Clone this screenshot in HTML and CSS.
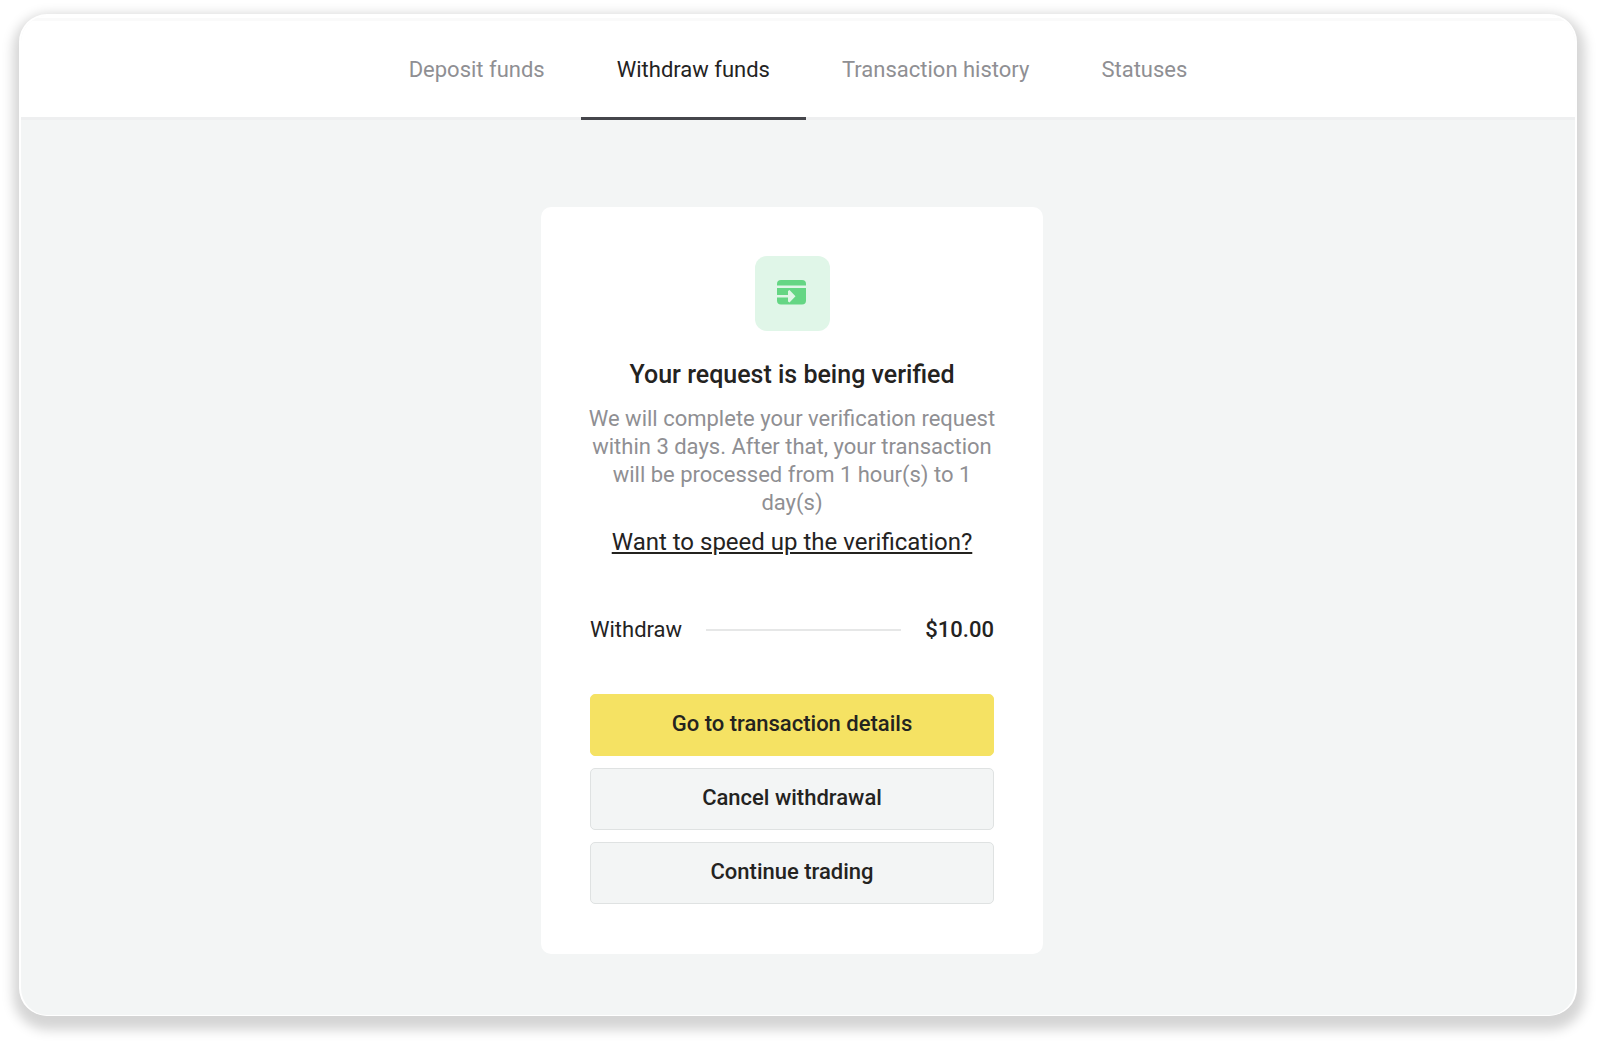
FILE: index.html
```
<!DOCTYPE html>
<html lang="en">
<head>
  <meta charset="UTF-8">
  <meta name="viewport" content="width=device-width, initial-scale=1">
  <title>Withdraw funds</title>
  <link rel="stylesheet" href="styles.css">
</head>
<body>

  <div class="window">
    <nav class="tabs">
      <a class="tab" href="#deposit">Deposit funds</a>
      <a class="tab active" href="#withdraw" aria-current="page">Withdraw funds</a>
      <a class="tab" href="#history">Transaction history</a>
      <a class="tab" href="#statuses">Statuses</a>
    </nav>

    <main class="content">
      <section class="card">
        <div class="card-icon">
          <svg width="30" height="26" viewBox="0 0 30 26" aria-hidden="true">
            <path fill="#65d684" d="M4 0h21a4 4 0 0 1 4 4v1.500H0V4a4 4 0 0 1 4-4z"/>
            <path fill="#65d684" d="M0 8h29v12.500a4 4 0 0 1-4 4H4a4 4 0 0 1-4-4z"/>
            <path fill="#e0f6e8" d="M0 15h11v-4l1.500-1 6 6.200-6 6.300-1.500-1v-4H0z"/>
          </svg>
        </div>
        <h1 class="title">Your request is being verified</h1>
        <p class="text">We will complete your verification request within 3 days. After that, your transaction will be processed from 1 hour(s) to 1 day(s)</p>
        <a class="speed-up" href="#verification">Want to speed up the verification?</a>

        <div class="summary">
          <span>Withdraw</span>
          <span class="line"></span>
          <span class="amount">$10.00</span>
        </div>

        <div class="actions">
          <button class="btn btn-primary" type="button">Go to transaction details</button>
          <button class="btn" type="button">Cancel withdrawal</button>
          <button class="btn" type="button">Continue trading</button>
        </div>
      </section>
    </main>
  </div>

</body>
</html>
```
FILE: styles.css
```
* {
  box-sizing: border-box;
}

html, body {
  height: 100%;
  margin: 0;
}

body {
  display: flex;
  padding: 14px 23px 28px 19px;
  background: #fff;
  color: #24231f;
  font-family: Roboto, sans-serif;
  font-size: 22px;
  line-height: 28px;
}

/* Window frame */
.window {
  flex: 1;
  display: flex;
  flex-direction: column;
  border: 2px solid #fff;
  border-bottom-width: 1px;
  border-radius: 28px;
  overflow: hidden;
  background: #f3f5f5;
  box-shadow: 1px 7px 12px 7px rgba(0,0,0,0.17);
}

/* Tabs */
.tabs {
  display: flex;
  justify-content: center;
  background: #fff;
  border-top: 2px solid #fff;
  border-bottom: 3px solid #eeeff0;
  box-shadow: inset 0 3px 0 #fafafa;
}
.tab {
  margin-bottom: -3px;
  padding: 38px 36px 33px;
  border-bottom: 3px solid transparent;
  color: #8f8f93;
  text-decoration: none;
}
.tab.active {
  color: #24231f;
  border-bottom-color: #45464b;
}

/* Card */
.content {
  flex: 1;
  padding: 87px 12px 60px 0;
}
.card {
  display: flex;
  flex-direction: column;
  align-items: center;
  width: 502px;
  max-width: 100%;
  margin: 0 auto;
  padding: 49px 49px 50px;
  border-radius: 10px;
  background: #fff;
  text-align: center;
}
.card-icon {
  display: flex;
  justify-content: center;
  align-items: center;
  width: 75px;
  height: 75px;
  padding-bottom: 2px;
  border-radius: 12px;
  background: #e0f6e8;
}
.title {
  margin: 30px 0 16px;
  font-size: 25px;
  font-weight: 500;
}
/* runs a little wider than the buttons */
.text {
  margin: 0 -8px 11px;
  color: #8f8f93;
}
.speed-up {
  color: #24231f;
  font-size: 24px;
}

/* Amount row */
.summary {
  display: flex;
  align-items: center;
  gap: 24px;
  width: 100%;
  margin: 60px 0 50px;
}
.line {
  flex: 1;
  height: 2px;
  background: #e6e7e7;
}
.amount {
  font-weight: 500;
}

/* Buttons */
.actions {
  display: flex;
  flex-direction: column;
  gap: 12px;
  width: 100%;
}
.btn {
  height: 62px;
  padding: 0 16px 2px;
  border: 1px solid #dfe2e2;
  border-radius: 5px;
  background: #f3f5f5;
  color: #24231f;
  font: inherit;
  font-weight: 500;
  cursor: pointer;
}
.btn-primary {
  border-color: #f5e263;
  background: #f5e263;
}
```
